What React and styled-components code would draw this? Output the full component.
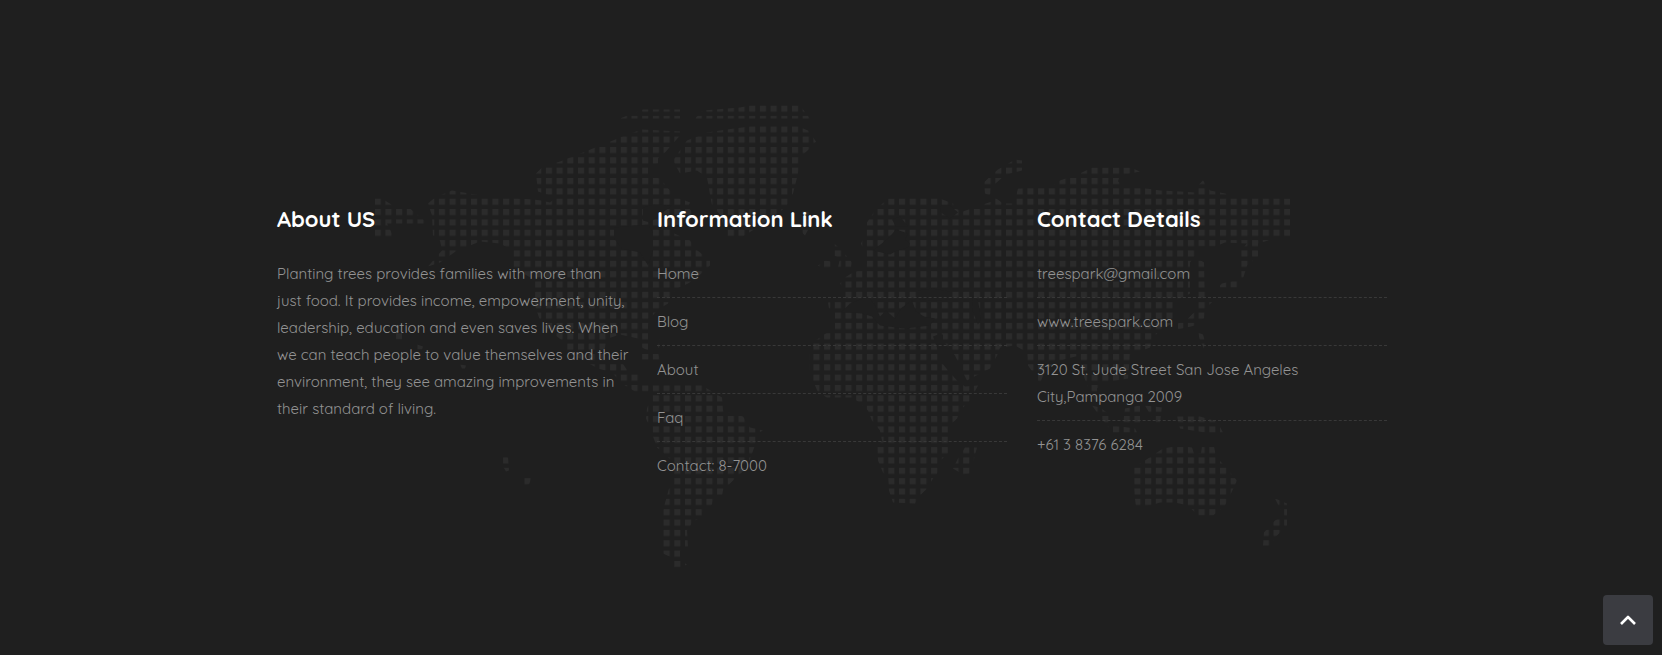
import React from "react";
import styled, { createGlobalStyle } from "styled-components";

const GlobalStyle = createGlobalStyle`
  *, *::before, *::after { box-sizing: border-box; }
  body {
    margin: 0;
    background: #1f1f1f;
    color: #939393;
    font-family: Quicksand, Lato, sans-serif;
    font-size: 15px;
    line-height: 27px;
  }
`;

const FooterArea = styled.footer`
  position: relative;
  padding: 200px 24px 176px 26px;
  background: #1f1f1f;
`;

const MapBackdrop = styled.svg`
  position: absolute;
  top: 50%;
  left: 50%;
  width: 920px;
  height: 481px;
  transform: translate(-50%, -50%);
  pointer-events: none;
`;

const Columns = styled.div`
  position: relative;
  display: grid;
  grid-template-columns: repeat(3, minmax(0, 1fr));
  gap: 30px;
  max-width: 1110px;
  margin: 0 auto;

  @media (max-width: 767px) {
    grid-template-columns: 1fr;
  }
`;

const Column = styled.section`
  display: flex;
  flex-direction: column;
  gap: 22px;
`;

const Title = styled.h2`
  margin: 0;
  color: #fff;
  font-size: 22px;
  font-weight: 700;
  line-height: 38px;
`;

const Paragraph = styled.p`
  margin: 0 -2px 0 0;
`;

const List = styled.ul`
  margin: 0;
  padding: 0;
  list-style: none;
`;

const Item = styled.li`
  & + & {
    margin-top: 10px;
  }
  &:not(:last-child) {
    padding-bottom: 10px;
    border-bottom: 1px dashed #383838;
  }
`;

const FooterLink = styled.a`
  color: inherit;
  text-decoration: none;

  &:hover {
    color: #fff;
  }
`;

const BackToTop = styled.button`
  position: fixed;
  right: 9px;
  bottom: 10px;
  display: flex;
  align-items: center;
  justify-content: center;
  width: 50px;
  height: 50px;
  padding: 0;
  border: 0;
  border-radius: 4px;
  background: #3b3c41;
  color: #fff;
  cursor: pointer;
`;

const land = [
  // Chukotka
  "375,196 380,197 393,205 410,208 428,223 387,223 392,233 392,237 375,237",
  // Arctic islands and northern Greenland
  "620,118 643,109 680,109 680,118",
  "695,118 703,110 740,107 750,105 800,105 810,118",
  // Greenland
  "707,132 727,129 750,126 798,126 808,130 816,141 813,145 802,155 798,173 793,193 787,205 777,214 743,236 727,236 720,214 712,205 707,177 697,170 680,173 673,160 687,140",
  // North America
  "428,203 435,197 452,190 475,194 507,197 533,199 541,200 550,202 556,197 538,191 536,173 542,167 560,161 593,148 613,140 622,136 642,129 680,131 680,135 665,152 658,158 658,163 648,165 648,175 660,178 670,190 677,197 690,202 688,207 695,214 690,221 672,226 672,232 690,240 695,248 710,260 710,265 697,277 688,283 677,288 670,297 668,303 658,309 650,318 648,326 648,350 640,346 638,338 620,334 608,338 604,350 606,362 622,362 628,371 639,374 639,385 702,385 722,397 723,410 743,416 750,427 763,430 757,433 756,442 752,453 747,467 733,480 723,490 722,495 713,500 712,504 702,512 702,516 692,522 690,526 687,530 688,547 680,550 680,560 687,564 680,567 674,567 674,558 663,553 663,510 669,488 674,477 674,462 657,447 652,433 646,418 647,408 652,395 650,391 635,391 622,383 612,372 598,368 580,358 568,352 562,340 552,332 540,320 535,305 535,280 522,272 513,267 513,250 500,243 480,241 470,245 457,250 440,262 428,266 442,250 440,240 433,235 432,215",
  // Caribbean
  "640,353 658,352 660,359 640,359",
  "659,338 664,344 664,347 658,347",
  // Iceland, Ireland, Great Britain
  "800,210 812,212 812,222 805,235 800,230",
  "818,265 825,260 831,261 831,267 822,268",
  "834,243 841,249 852,262 851,267 838,267 840,258 834,255",
  // Europe, Asia and Africa
  "888,198 937,197 953,203 955,208 963,211 980,205 995,200 995,197 1003,203 1014,203 1018,188 1035,187 1050,187 1060,180 1080,173 1092,167 1130,167 1140,171 1120,175 1118,181 1125,185 1140,187 1160,190 1180,191 1195,192 1198,185 1203,180 1210,190 1225,193 1240,197 1290,198 1290,236 1275,236 1268,240 1258,243 1258,256 1247,265 1243,278 1237,287 1218,287 1222,283 1235,280 1241,272 1241,250 1247,243 1225,242 1215,246 1197,246 1195,255 1190,262 1190,293 1173,302 1173,323 1162,328 1152,338 1150,347 1130,355 1128,378 1105,382 1097,388 1098,405 1087,385 1082,370 1080,355 1067,358 1055,362 1045,370 1040,383 1033,372 1028,365 1027,352 1015,345 1000,347 997,355 990,368 980,373 967,380 962,370 955,355 943,340 943,334 938,334 933,336 938,350 940,360 948,370 957,380 965,386 978,385 970,400 960,410 957,418 948,427 948,453 938,462 938,472 933,478 927,488 920,495 915,503 893,502 889,490 888,477 883,472 878,460 877,447 882,440 880,430 872,420 868,410 858,401 852,397 827,397 818,392 813,380 809,372 809,350 813,342 824,334 835,328 835,312 829,308 828,302 845,298 845,290 840,283 845,277 853,272 866,268 867,260 866,255 861,243 866,233 867,222 875,210",
  // Madagascar
  "965,447 977,447 970,473 963,474 953,468 958,458",
  // Japan and the Philippines
  "1198,258 1204,262 1205,290 1208,297 1214,300 1205,308 1204,318 1195,325 1178,329 1178,323 1188,318 1198,308 1197,290",
  "1198,332 1203,334 1205,341 1204,348 1200,340",
  // Indonesia and New Guinea
  "1092,405 1100,407 1108,413 1113,425 1135,428 1137,432 1113,432 1103,420",
  "1125,408 1140,405 1140,423 1123,422",
  "1145,405 1162,407 1160,422 1155,422",
  "1177,416 1200,416 1217,421 1223,432 1205,432 1180,428",
  // Australia and New Zealand
  "1134,467 1148,458 1163,448 1180,445 1192,447 1194,453 1201,453 1202,446 1214,446 1216,456 1225,466 1237,480 1230,495 1225,505 1213,515 1198,515 1188,505 1175,502 1160,502 1150,505 1136,506 1134,490",
  "1275,498 1287,503 1287,525 1275,537 1270,545 1263,545 1264,532 1275,520 1282,516 1280,508",
  // Novaya Zemlya
  "985,193 983,183 990,176 998,169 1005,165 1015,159 1022,160 1022,170 1010,173 1000,179 991,187 990,195",
  // Pacific islands
  "503,455 508,457 509,470 506,471 502,464",
  "524,476 532,476 529,484 524,485",
  "396,332 402,332 402,339 396,339",
  "417,344 423,346 422,349 417,349",
  "460,364 466,365 465,368 462,368",
];

const water = [
  // Hudson Bay
  "614,227 648,224 653,232 653,250 648,265 640,252 622,248 614,238",
  "643,207 654,204 672,205 660,214 650,222 643,220",
  // Baltic Sea
  "873,250 888,238 896,229 908,233 905,239 910,243 908,247 897,250 890,254",
  "892,219 900,216 908,226 896,226",
  // Mediterranean
  "841,312 850,303 868,296 874,303 880,316 886,310 895,318 902,307 912,300 916,311 924,316 935,318 930,325 905,328 880,325 872,316 862,313 850,312",
  // Black Sea and Caspian Sea
  "918,290 932,288 950,291 950,299 935,300 918,299",
  "972,295 978,300 981,318 978,324 973,312",
  // White Sea
  "940,205 950,205 958,212 950,218 941,212",
];

const toPath = (points) => `M${points.replace(/ /g, "L")}Z`;

function WorldMap() {
  return (
    <MapBackdrop viewBox="371 87 920 481" aria-hidden="true">
      <defs>
        <pattern id="dots" x="374.7" y="136.1" width="10.7" height="10.35" patternUnits="userSpaceOnUse">
          <rect width="6" height="6" fill="#2b2b2b" />
        </pattern>
      </defs>
      <path d={land.map(toPath).join("")} fill="url(#dots)" />
      <path d={water.map(toPath).join("")} fill="#1f1f1f" />
    </MapBackdrop>
  );
}

export default function App() {
  return (
    <>
      <GlobalStyle />
      <FooterArea>
        <WorldMap />
        <Columns>
          <Column>
            <Title>About US</Title>
            <Paragraph>
              Planting trees provides families with more than just food. It provides income, empowerment, unity,
              leadership, education and even saves lives. When we can teach people to value themselves and their
              environment, they see amazing improvements in their standard of living.
            </Paragraph>
          </Column>
          <Column>
            <Title>Information Link</Title>
            <List>
              {["Home", "Blog", "About", "Faq", "Contact: 8-7000"].map((label) => (
                <Item key={label}>
                  <FooterLink href="#">{label}</FooterLink>
                </Item>
              ))}
            </List>
          </Column>
          <Column>
            <Title>Contact Details</Title>
            <List>
              <Item>treespark@gmail.com</Item>
              <Item>www.treespark.com</Item>
              <Item>
                3120 St. Jude Street San Jose Angeles
                <br />
                City,Pampanga 2009
              </Item>
              <Item>+61 3 8376 6284</Item>
            </List>
          </Column>
        </Columns>
      </FooterArea>
      <BackToTop type="button" aria-label="Back to top">
        <svg width="18" height="12" viewBox="0 0 18 12" fill="none" aria-hidden="true">
          <path d="M2 10L9 3L16 10" stroke="currentColor" strokeWidth="2.6" strokeLinejoin="round" />
        </svg>
      </BackToTop>
    </>
  );
}
